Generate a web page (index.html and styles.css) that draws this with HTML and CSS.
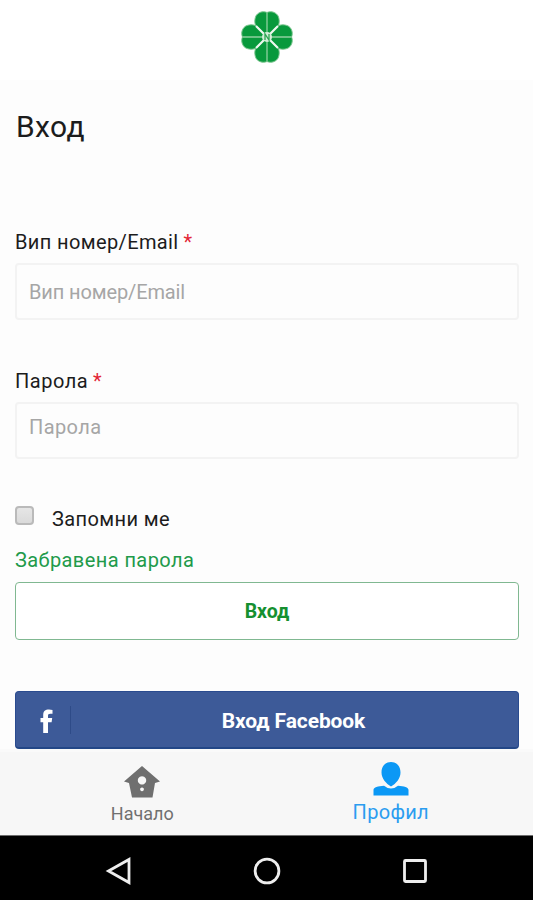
FILE: index.html
```html
<!DOCTYPE html>
<html lang="bg">

<head>
    <meta charset="UTF-8" />
    <meta name="viewport" content="width=device-width, initial-scale=1.0" />
    <title>Вход</title>
    <link rel="stylesheet" href="styles.css">
</head>

<body>
    <header class="header">
        <svg class="logo" viewBox="0 0 54 54">
            <g fill="#08993c" stroke="#7cc68f" stroke-width="1">
                <path d="M27 26 L18 19 C14 15 14.5 10 15.5 7 C17 2.5 23 .5 27 2.5 C31 .5 37 2.5 38.5 7 C39.5 10 40 15 36 19 Z" />
                <path d="M27 28 L18 35 C14 39 14.5 44 15.5 47 C17 51.5 23 53.5 27 51.5 C31 53.5 37 51.5 38.5 47 C39.5 44 40 39 36 35 Z" />
                <path d="M26 27 L19 18 C15 14 10 14.5 7 15.5 C2.5 17 .5 23 2.5 27 C.5 31 2.5 37 7 38.5 C10 39.5 15 40 19 36 Z" />
                <path d="M28 27 L35 18 C39 14 44 14.5 47 15.5 C51.5 17 53.5 23 51.5 27 C53.5 31 51.5 37 47 38.5 C44 39.5 39 40 35 36 Z" />
            </g>
            <path d="M27 3V51M3 27H51" stroke="#8fd09f" stroke-width="1.3" />
            <path d="M16 16L38 38M38 16L16 38" stroke="#eef8ef" stroke-width="2.2" />
            <circle cx="27" cy="27" r="5" fill="#d3edd8" />
            <path d="M25 30V24L29 30V24" fill="none" stroke="#2da653" stroke-width="1.3" />
        </svg>
    </header>

    <main class="login">
        <h1 class="title">Вход</h1>
        <form>
            <label class="label" for="email"><span class="label-email">Вип номер/Email</span> <span class="required">*</span></label>
            <input class="field field-email" type="text" id="email" placeholder="Вип номер/Email">

            <label class="label" for="password"><span class="label-password">Парола</span> <span class="required">*</span></label>
            <input class="field field-password" type="password" id="password" placeholder="Парола">

            <label class="remember">
                <input class="checkbox" type="checkbox">
                <span>Запомни ме</span>
            </label>
            <a class="forgot" href="#">Забравена парола</a>
            <button class="btn btn-login" type="submit">Вход</button>
            <button class="btn btn-facebook" type="button">
                <span class="fb-icon">
                    <svg width="14" height="24" viewBox="0 0 14 24">
                        <path fill="#fff" d="M3.2 24V13.2H.5V9H3.2V6.2C3.2 2.3 5.2.6 9 .6Q11 .6 12.5 1V4.8H10.3C8.4 4.8 8 5.6 8 7V9H12.2L11.6 13.2H8V24Z" />
                    </svg>
                </span>
                <span class="fb-text">Вход Facebook</span>
            </button>
        </form>
    </main>

    <nav class="tabs">
        <a class="tab" href="#">
            <svg class="tab-icon" width="36" height="36" viewBox="0 0 36 36">
                <path fill="#6f6f6f" fill-rule="evenodd" d="M18 4L36 19.5L31 21L28.5 35.5H8L5 21L0 19.5ZM18 14.2a4.2 4.2 0 1 0 .01 0ZM18 25.4a1.9 1.9 0 1 0 .01 0Z" />
            </svg>
            <span class="tab-home">Начало</span>
        </a>
        <a class="tab active" href="#">
            <svg class="tab-icon" width="36" height="36" viewBox="0 0 36 36">
                <path fill="#0b98f5" d="M18 0C24 0 27.5 4.5 27.5 10.5C27.5 16.5 23 21.5 18 24.5C13 21.5 8.5 16.5 8.5 10.5C8.5 4.5 12 0 18 0ZM.5 33.5V28C.5 25 5 24.2 11 23.7Q18 29.5 25 23.7C31 24.2 35.5 25 35.5 28V33.5Z" />
            </svg>
            <span class="tab-profile">Профил</span>
        </a>
    </nav>

    <footer class="system-bar">
        <svg width="30" height="30" viewBox="0 0 30 30">
            <path d="M4.5 15L25 3.5V26.5Z" />
        </svg>
        <svg width="30" height="30" viewBox="0 0 30 30">
            <circle cx="15" cy="15" r="11.9" />
        </svg>
        <svg width="30" height="30" viewBox="0 0 30 30">
            <rect x="4.5" y="4.5" width="21" height="21" rx="1" />
        </svg>
    </footer>
</body>

</html>
```
FILE: styles.css
```css
* {
    box-sizing: border-box;
}

body {
    margin: 0;
    height: 900px;
    display: flex;
    flex-direction: column;
    overflow: hidden;
    background-color: #fdfdfd;
    color: #1c1c1c;
    font-family: Roboto, "Liberation Sans", sans-serif;
    font-size: 20px;
}

.header {
    height: 80px;
    flex: none;
    display: flex;
    justify-content: center;
    padding-top: 10px;
    background-color: #fff;
}

.logo {
    width: 54px;
    height: 54px;
}

.login {
    height: 669px;
    flex: none;
    padding: 29px 14px 0 15px;
}

.title {
    margin: 0 0 83px;
    padding-left: 1px;
    font-size: 30px;
    line-height: 36px;
    font-weight: 400;
    letter-spacing: 0.4px;
}

.label {
    display: block;
    height: 35px;
    line-height: 28px;
    white-space: nowrap;
}

.label-email {
    letter-spacing: 0.38px;
}

.label-password {
    letter-spacing: 0.5px;
}

.required {
    color: #e32636;
}

.field {
    display: block;
    width: 100%;
    height: 57px;
    margin: 0 0 47px;
    padding: 0 12px;
    border: 2px solid #f3f3f3;
    border-radius: 4px;
    background-color: #fdfdfd;
    font-family: inherit;
    font-size: 20px;
    letter-spacing: -0.12px;
    outline: none;
}

.field::placeholder {
    color: #a6a6a6;
    opacity: 1;
}

.field-password {
    margin-bottom: 46px;
    padding-bottom: 8px;
    letter-spacing: 0.4px;
}

.remember {
    display: flex;
    height: 28px;
    line-height: 28px;
    letter-spacing: 0.4px;
}

.checkbox {
    appearance: none;
    width: 19px;
    height: 19px;
    margin: 1px 18px 0 0;
    border: 2px solid #bababa;
    border-radius: 4px;
    background: linear-gradient(#e6e6e6, #dadada);
}

.forgot {
    display: block;
    height: 49px;
    padding-top: 14px;
    line-height: 27px;
    color: #219a4a;
    letter-spacing: 0.42px;
    text-decoration: none;
}

.btn {
    display: flex;
    align-items: center;
    justify-content: center;
    width: 100%;
    height: 58px;
    padding: 0;
    border-radius: 4px;
    font-family: inherit;
    font-size: 21px;
    font-weight: 700;
}

.btn-login {
    margin-bottom: 51px;
    border: 1.5px solid #80b891;
    background-color: #fff;
    color: #159030;
    font-size: 19.5px;
}

.btn-facebook {
    border: 1px solid #2a4b8f;
    border-bottom: 2px solid #234787;
    background-color: #3d5a98;
    color: #fff;
}

.fb-icon {
    display: flex;
    justify-content: center;
    width: 55px;
    height: 28px;
    padding: 3px 0 0 8px;
    border-right: 1px solid #2e4b88;
}

.fb-text {
    flex: 1;
    padding: 2px 2px 0 0;
    text-align: center;
    letter-spacing: -0.1px;
}

.tabs {
    height: 86px;
    flex: none;
    display: flex;
    padding: 10px 18px 0;
    border-top: 3px solid #fafafa;
    background-color: #f7f7f7;
}

.tab {
    flex: 1;
    display: flex;
    flex-direction: column;
    align-items: center;
    color: #707070;
    font-size: 18px;
    text-decoration: none;
}

.active {
    color: #2b9df0;
    font-size: 20px;
}

.tab-icon {
    flex: none;
}

.tab-home {
    line-height: 31px;
}

.tab-profile {
    line-height: 28px;
    letter-spacing: 0.3px;
}

.system-bar {
    height: 65px;
    flex: none;
    display: flex;
    align-items: center;
    justify-content: space-between;
    padding: 6px 103px 0 104px;
    border-top: 1px solid #6c6c6c;
    background-color: #000;
}

.system-bar svg {
    fill: none;
    stroke: #eee;
    stroke-width: 2.8;
}
```
